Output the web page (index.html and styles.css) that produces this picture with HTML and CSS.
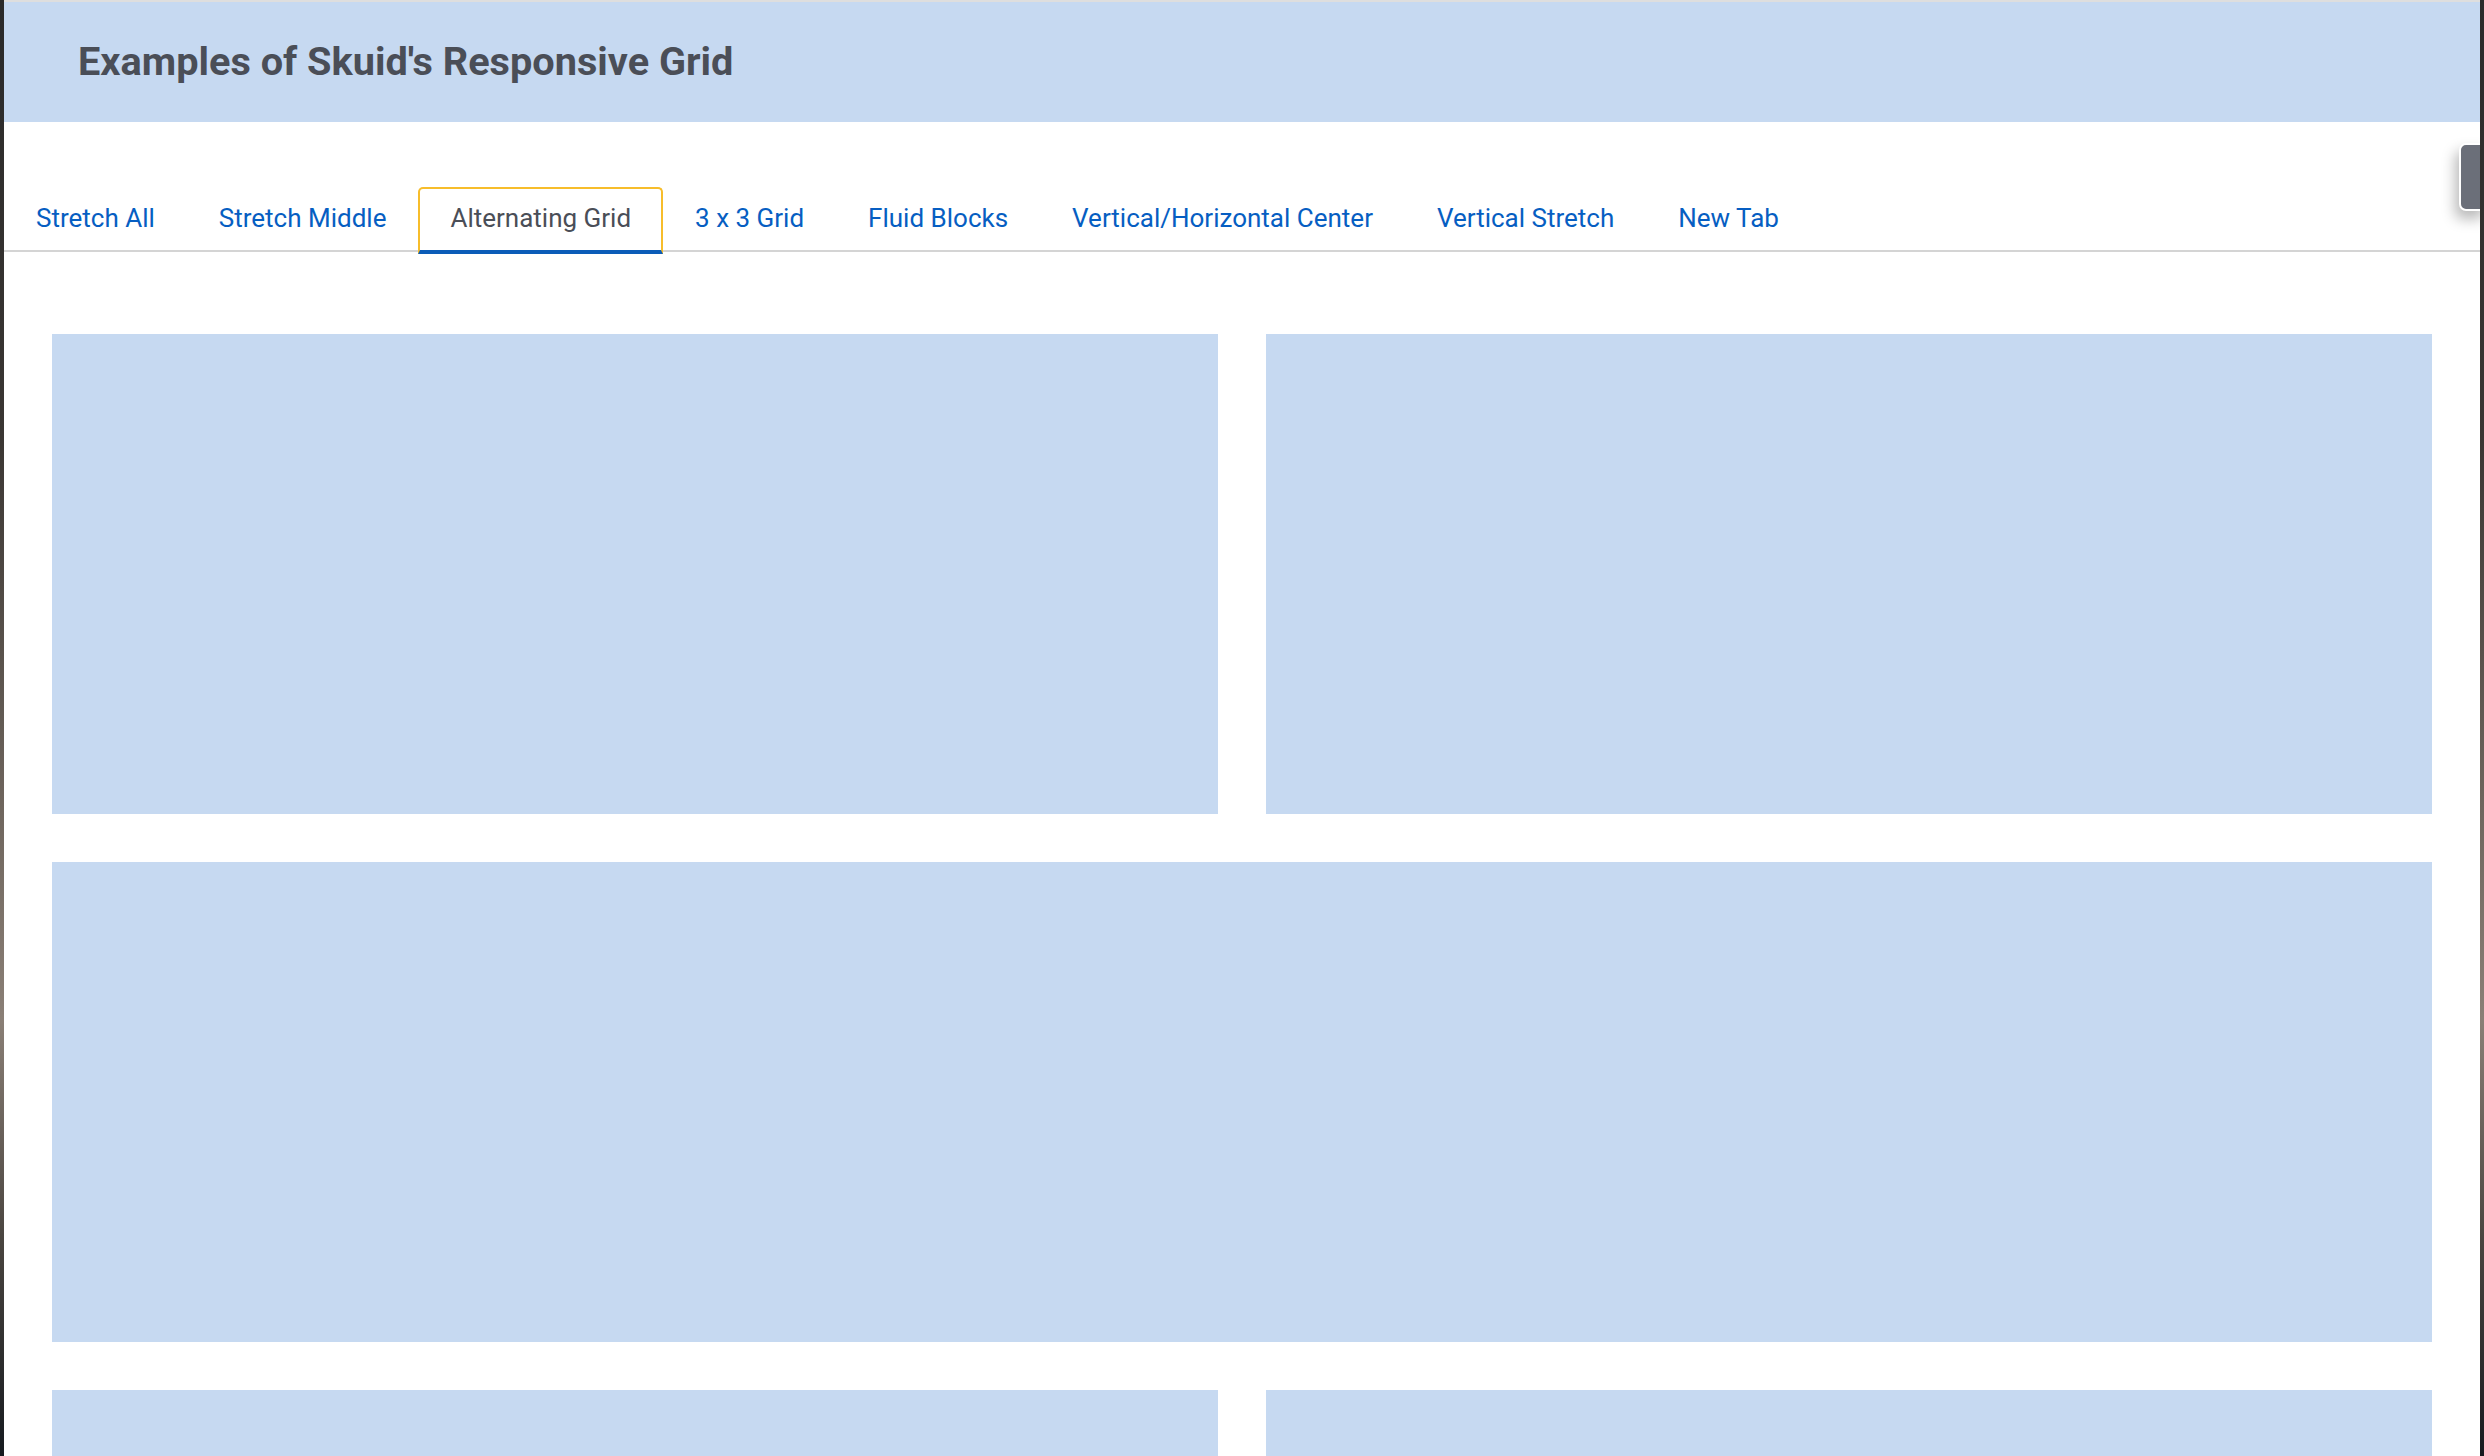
FILE: index.html
```html
<!DOCTYPE html>
<html lang="en">
<head>
<meta charset="utf-8">
<title>Examples of Skuid's Responsive Grid</title>
<link rel="stylesheet" href="styles.css">
</head>
<body>
<div class="page">
  <header class="page-header">
    <h1 class="page-title">Examples of Skuid's Responsive Grid</h1>
  </header>
  <nav class="tabs">
    <a class="tab">Stretch All</a>
    <a class="tab">Stretch Middle</a>
    <a class="tab tab-active">Alternating Grid</a>
    <a class="tab">3 x 3 Grid</a>
    <a class="tab">Fluid Blocks</a>
    <a class="tab">Vertical/Horizontal Center</a>
    <a class="tab">Vertical Stretch</a>
    <a class="tab">New Tab</a>
  </nav>
  <main class="grid">
    <div class="block"></div>
    <div class="block"></div>
    <div class="block block-wide"></div>
    <div class="block"></div>
    <div class="block"></div>
  </main>
  <div class="side-handle"></div>
</div>
</body>
</html>
```
FILE: styles.css
```css
html, body {
  margin: 0;
  padding: 0;
  height: 100%;
  overflow: hidden;
}
body {
  background: linear-gradient(180deg, #2a2a2a 0%, #3a3633 30%, #6e655d 55%, #8a7f76 70%, #4a4540 85%, #161a1f 100%);
  font-family: Roboto, "Liberation Sans", sans-serif;
}
.page {
  position: relative;
  margin: 0 4px;
  height: 100%;
  background: #ffffff;
  border-top: 2px solid #dedede;
  overflow: hidden;
}
.page-header {
  height: 120px;
  background: #c6d9f1;
  display: flex;
  align-items: center;
  padding: 0 0 0 74px;
  box-sizing: border-box;
}
.page-title {
  margin: 0;
  font-size: 39.7px;
  font-weight: 700;
  color: #4a4e57;
  line-height: 1.2;
}
.tabs {
  display: flex;
  margin-top: 65px;
  border-bottom: 2px solid #d4d4d4;
}
.tab {
  display: block;
  font-size: 26px;
  line-height: 30px;
  color: #065ec2;
  padding: 14px 30px 17px;
  border: 2px solid transparent;
  border-bottom: 4px solid transparent;
  margin-bottom: -4px;
  border-radius: 5px 5px 0 0;
  white-space: nowrap;
  cursor: pointer;
}
.tab-active {
  color: #4a4e57;
  border-color: #f7bd2b;
  border-bottom-color: #0b5cb8;
}
.grid {
  display: grid;
  grid-template-columns: 1fr 1fr;
  grid-auto-rows: 480px;
  gap: 48px;
  padding: 82px 48px 48px;
}
.block {
  background: #c6d9f1;
}
.block-wide {
  grid-column: 1 / -1;
}
.side-handle {
  position: absolute;
  top: 141px;
  right: -8px;
  width: 25px;
  height: 64px;
  background: #6b6f79;
  border: 2px solid #ffffff;
  border-radius: 7px;
  box-shadow: -4px 8px 14px rgba(0, 0, 0, 0.28);
}
```
